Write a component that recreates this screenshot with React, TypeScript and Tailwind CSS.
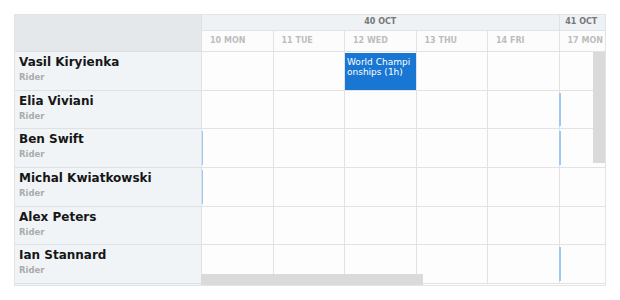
import React from "react";

const riders = [
  { name: "Vasil Kiryienka" },
  { name: "Elia Viviani" },
  { name: "Ben Swift" },
  { name: "Michal Kwiatkowski" },
  { name: "Alex Peters" },
  { name: "Ian Stannard" },
];

const days = ["10 MON", "11 TUE", "12 WED", "13 THU", "14 FRI", "17 MON"];

// markers: [rowIndex, colIndex]
const markers: Array<[number, number]> = [
  [1, 5],
  [2, 5],
  [5, 5],
  [2, 0],
  [3, 0],
];

export default function App() {
  return (
    <div
      className="w-[620px] h-[300px] bg-white pt-[14px] pl-[14px]"
      style={{ fontFamily: '"DejaVu Sans", sans-serif' }}
    >
      <div className="relative w-[592px] h-[272px] border border-[#e2e4e6] flex overflow-hidden">
        {/* Left column */}
        <div className="w-[187px] shrink-0 border-r border-[#dfe2e5] bg-[#f1f4f7] flex flex-col">
          <div className="h-[37px] shrink-0 bg-[#e5e8eb] border-b border-[#dcdfe2]" />
          {riders.map((r) => (
            <div
              key={r.name}
              className="h-[38.7px] shrink-0 border-b border-[#dde1e4] pl-[4px] pt-[3px]"
            >
              <div className="text-[12px] leading-[15px] font-bold text-[#161616]">{r.name}</div>
              <div className="text-[8.5px] leading-[11px] font-bold text-[#ababab] mt-[2px]">Rider</div>
            </div>
          ))}
        </div>

        {/* Right area */}
        <div className="flex-1 overflow-hidden flex flex-col">
          <div className="h-[16px] shrink-0 flex bg-[#eef2f5] border-b border-[#e0e3e6]">
            <div className="w-[357.5px] shrink-0 border-r border-[#dfe2e5] text-center text-[8px] leading-[10px] pt-[1.5px] font-bold text-[#777]">
              40 OCT
            </div>
            <div className="flex-1 text-center text-[8px] leading-[10px] pt-[1.5px] font-bold text-[#777] pr-[2px]">
              41 OCT
            </div>
          </div>
          <div className="h-[21px] shrink-0 flex bg-[#fcfcfc] border-b border-[#e0e3e6]">
            {days.map((d) => (
              <div
                key={d}
                className="w-[71.5px] shrink-0 border-r border-[#e3e3e3] flex items-center pl-[8px] text-[8px] font-bold text-[#bdbdbd] whitespace-nowrap"
              >
                {d}
              </div>
            ))}
          </div>
          {riders.map((r, ri) => (
            <div key={r.name} className="h-[38.7px] shrink-0 flex bg-[#fdfdfd]">
              {days.map((d, ci) => (
                <div
                  key={d}
                  className="relative w-[71.5px] shrink-0 border-r border-b border-[#e2e2e2]"
                >
                  {markers.some(([mr, mc]) => mr === ri && mc === ci) && (
                    <div className="absolute left-[-1px] top-[2px] bottom-[2px] w-[2px] bg-[#9cc8f3]" />
                  )}
                  {ri === 0 && ci === 2 && (
                    <div className="absolute left-0 right-0 top-[1px] bottom-0 bg-[#1976d2] text-white text-[9px] leading-[10px] px-[2px] pt-[4px] break-all">
                      World Championships (1h)
                    </div>
                  )}
                </div>
              ))}
            </div>
          ))}
        </div>

        {/* Scrollbars (overlay) */}
        <div className="absolute right-0 top-[37px] w-[12px] h-[111px] bg-[#dadada]" />
        <div className="absolute left-[186px] bottom-0 w-[222px] h-[11px] bg-[#dadada]" />
      </div>
    </div>
  );
}
